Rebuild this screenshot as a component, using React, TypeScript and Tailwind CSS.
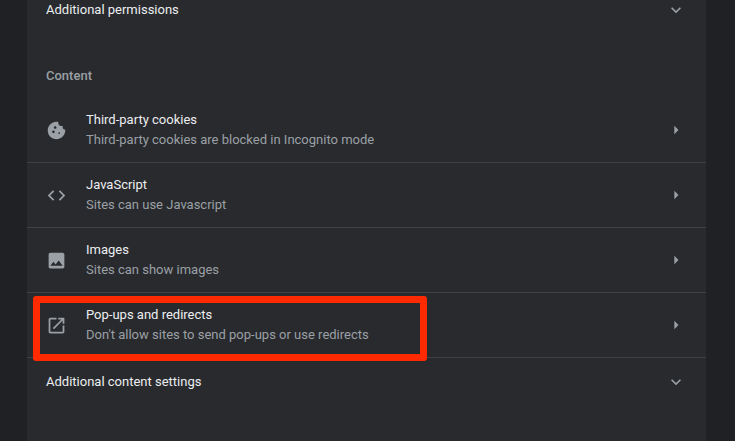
const font = { fontFamily: 'Roboto, sans-serif' }

function Icon({ d, className = 'text-[#9aa0a6]', size = 21 }: { d: string; className?: string; size?: number }) {
  return (
    <svg width={size} height={size} viewBox="0 0 24 24" fill="currentColor" className={`shrink-0 ${className}`}>
      <path d={d} />
    </svg>
  )
}

const CHEVRON = 'M16.59 8.59L12 13.17 7.41 8.59 6 10l6 6 6-6z'
const CARET = 'M10 7l5 5-5 5z'

const rows = [
  {
    title: 'Third-party cookies',
    sub: 'Third-party cookies are blocked in Incognito mode',
    icon: 'M21.95 10.99c-1.79-.03-3.7-1.95-2.68-4.22-2.97 1-5.78-1.59-5.19-4.56C7.11.74 2 6.41 2 12c0 5.52 4.48 10 10 10 5.89 0 10.54-5.08 9.95-11.01zM8.5 15c-.83 0-1.5-.67-1.5-1.5S7.67 12 8.5 12s1.5.67 1.5 1.5S9.33 15 8.5 15zm2-5C9.67 10 9 9.33 9 8.5S9.67 7 10.5 7s1.5.67 1.5 1.5-.67 1.5-1.5 1.5zm4.5 6c-.55 0-1-.45-1-1s.45-1 1-1 1 .45 1 1-.45 1-1 1z',
  },
  {
    title: 'JavaScript',
    sub: 'Sites can use Javascript',
    icon: 'M9.4 16.6L4.8 12l4.6-4.6L8 6l-6 6 6 6 1.4-1.4zm5.2 0l4.6-4.6-4.6-4.6L16 6l6 6-6 6-1.4-1.4z',
  },
  {
    title: 'Images',
    sub: 'Sites can show images',
    icon: 'M21 19V5c0-1.1-.9-2-2-2H5c-1.1 0-2 .9-2 2v14c0 1.1.9 2 2 2h14c1.1 0 2-.9 2-2zM8.5 13.5l2.5 3.01L14.5 12l4.5 6H5l3.5-4.5z',
  },
  {
    title: 'Pop-ups and redirects',
    sub: "Don't allow sites to send pop-ups or use redirects",
    icon: 'M19 19H5V5h7V3H5c-1.11 0-2 .9-2 2v14c0 1.1.89 2 2 2h14c1.1 0 2-.9 2-2v-7h-2v7zM14 3v2h3.59l-9.83 9.83 1.41 1.41L19 6.41V10h2V3h-7z',
  },
]

function ExpandRow({ label }: { label: string }) {
  return (
    <div className="flex h-[20px] items-center justify-between pl-[19px] pr-[20px] text-[13px] text-[#eceef1]">
      <span>{label}</span>
      <Icon d={CHEVRON} size={20} />
    </div>
  )
}

export default function App() {
  return (
    <div style={font} className="h-[441px] w-[735px] overflow-hidden bg-[#202124] px-[27px]">
      <div className="relative h-full w-[679px] bg-[#292a2d]">
        <ExpandRow label="Additional permissions" />
        <div className="mt-[45px] flex h-[21px] items-center pl-[19px] text-[13px] font-medium text-[#9aa0a6]">Content</div>
        <div className="mt-[12px]">
          {rows.map(r => (
            <div key={r.title} className="flex h-[65px] items-center border-b border-[#3f4043] pl-[19px] pr-[20px]">
              <Icon d={r.icon} />
              <div className="ml-[19px] flex-1">
                <div className="text-[13px] leading-[20px] text-[#eceef1]">{r.title}</div>
                <div className="text-[13px] leading-[20px] text-[#9aa0a6]">{r.sub}</div>
              </div>
              <Icon d={CARET} size={20} />
            </div>
          ))}
        </div>
        <div className="mt-[14px]">
          <ExpandRow label="Additional content settings" />
        </div>
        <div className="absolute left-[6px] top-[296px] h-[65px] w-[394px] rounded-[3px] border-[7px] border-[#ff2a00]" />
      </div>
    </div>
  )
}
